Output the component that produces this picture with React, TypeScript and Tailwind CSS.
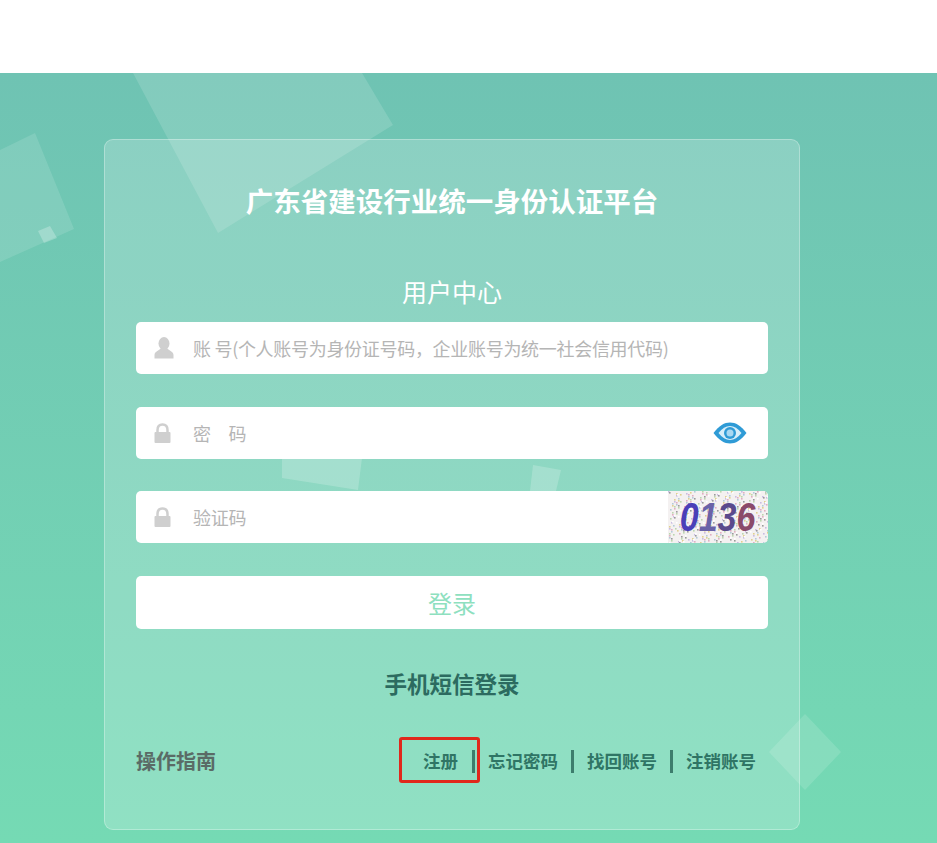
const font = "font-['Microsoft_YaHei','Noto_Sans_CJK_SC',sans-serif]"

function UserIcon() {
  return (
    <svg width="20" height="22" viewBox="0 0 20 22" className="shrink-0">
      <ellipse cx="10" cy="6.500" rx="5.500" ry="6.500" fill="#cfcfcf" />
      <path d="M0.500 21.500 V18 C0.500 14.500 5 13.500 7 11 H13 C15 13.500 19.500 14.500 19.500 18 V21.500 Z" fill="#cfcfcf" />
    </svg>
  )
}

function LockIcon() {
  return (
    <svg width="18" height="21" viewBox="0 0 18 21" className="shrink-0">
      <path d="M3.500 10 V7 C3.500 3.500 5.500 1.500 8.500 1.500 C11.500 1.500 13.500 3.500 13.500 7 V10" fill="none" stroke="#cfcfcf" strokeWidth="2.500" />
      <rect x="0.500" y="9" width="16" height="11" rx="1" fill="#cfcfcf" />
    </svg>
  )
}

function EyeIcon() {
  return (
    <svg width="34" height="22" viewBox="0 0 34 22">
      <path d="M0.500 11 C6 3.500 11.500 0.500 17 0.500 C22.500 0.500 28 3.500 33.500 11 C28 18.500 22.500 21.500 17 21.500 C11.500 21.500 6 18.500 0.500 11 Z" fill="#2f9bd6" />
      <path d="M5.500 11 C9 6.500 13 4 17 4 C21 4 25 6.500 28.500 11 C25 15.500 21 18 17 18 C13 18 9 15.500 5.500 11 Z" fill="#d8eef9" />
      <circle cx="17" cy="11" r="6" fill="#2f9bd6" />
      <circle cx="17" cy="11" r="3.500" fill="#a9d8f1" />
    </svg>
  )
}

// 验证码图片，噪点用固定序列生成
const noise = Array.from({ length: 420 }, (_, i) => ({
  x: (i * 37 + (i % 11) * 5) % 100,
  y: (i * 23 + (i % 7) * 11) % 52,
  c: ['#c9bbe2', '#e0d08f', '#b4cad8', '#e0aec2', '#bcd6ae', '#9a9a9a', '#ffffff'][i % 7],
}))

function Captcha() {
  return (
    <div className="relative flex h-full w-[100px] shrink-0 items-center justify-center overflow-hidden bg-[#f4f1f1]">
      <svg width="100" height="52" viewBox="0 0 100 52" className="absolute inset-0">
        {noise.map((n, i) => (
          <rect key={i} x={n.x} y={n.y} width="1.600" height="1.600" fill={n.c} />
        ))}
      </svg>
      <span className="relative scale-x-[0.83] font-['Liberation_Sans',sans-serif] text-[41px] font-bold italic leading-none text-[#4a3fb8]">
        0<span className="text-[#6a62a8]">1</span>
        <span className="text-[#5a4a8c]">3</span>
        <span className="text-[#8a4a6a]">6</span>
      </span>
    </div>
  )
}

function Field({
  icon,
  placeholder,
  right,
  className = '',
}: {
  icon: React.ReactNode
  placeholder: string
  right?: React.ReactNode
  className?: string
}) {
  return (
    <div className={`flex h-[52px] items-center overflow-hidden rounded-[5px] bg-white pl-[18px] ${className}`}>
      <div className="w-[39px] shrink-0">{icon}</div>
      <span className="flex-1 whitespace-pre text-[18px] tracking-[-0.3px] text-[#b5b5b5]">{placeholder}</span>
      {right}
    </div>
  )
}

export default function App() {
  return (
    <div className={`${font} min-h-[843px] bg-white pt-[73px]`}>
      <div className="relative h-[770px] overflow-hidden bg-gradient-to-b from-[#6fc3b3] to-[#75dab4] pt-[66px]">
        {/* 背景装饰 */}
        <svg width="937" height="770" viewBox="0 0 937 770" className="absolute left-0 top-0">
          <g fill="#ffffff">
            <polygon points="133,0 362,0 393,52 218,160" opacity="0.14" />
            <polygon points="0,77 35,60 74,156 0,189" opacity="0.12" />
            <polygon points="50,153 57,165 44,170 38,158" opacity="0.25" />
            <polygon points="282,386 362,385 358,417 282,405" opacity="0.2" />
            <polygon points="533,392 561,397 556,418 530,418" opacity="0.2" />
            <polygon points="805,641 841,679 805,717 769,679" opacity="0.13" />
          </g>
        </svg>

        <div className="relative ml-[104px] h-[691px] w-[696px] rounded-[9px] border border-white/30 bg-white/20 px-[31px] pt-[40px]">
          <h1 className="text-center text-[27.5px] font-bold leading-[40px] text-white">广东省建设行业统一身份认证平台</h1>
          <div className="mt-[56px] text-center text-[25px] leading-[30px] text-white">用户中心</div>

          <Field
            className="mt-[16px]"
            icon={<UserIcon />}
            placeholder="账 号(个人账号为身份证号码，企业账号为统一社会信用代码)"
          />
          <Field
            className="mt-[33px] pr-[21px]"
            icon={<LockIcon />}
            placeholder={'密\u3000码'}
            right={<EyeIcon />}
          />
          <Field className="mt-[32px]" icon={<LockIcon />} placeholder="验证码" right={<Captcha />} />

          <button className="mt-[33px] block h-[53px] w-full rounded-[5px] bg-white text-[24px] text-[#8ee0bf]">登录</button>

          <div className="mt-[39px] text-center text-[22.5px] font-bold leading-[30px] text-[#2c6b60]">手机短信登录</div>

          <div className="mt-[40px] flex h-[46px] items-center justify-between pr-[12px]">
            <span className="text-[20px] font-bold text-[#5a6b66]">操作指南</span>
            <div className="flex items-center text-[17.5px] font-bold text-[#2f7565]">
              <a className="relative">
                注册
                <span className="absolute -left-[24px] -top-[11px] h-[46px] w-[81px] rounded-[3px] border-[3px] border-[#e0281c]" />
              </a>
              <span className="ml-[14px] mr-[13px] h-[23px] w-[3px] bg-[#3d7d6d]" />
              <a>忘记密码</a>
              <span className="ml-[13px] mr-[13px] h-[23px] w-[3px] bg-[#3d7d6d]" />
              <a>找回账号</a>
              <span className="ml-[13px] mr-[13px] h-[23px] w-[3px] bg-[#3d7d6d]" />
              <a>注销账号</a>
            </div>
          </div>
        </div>
      </div>
    </div>
  )
}
